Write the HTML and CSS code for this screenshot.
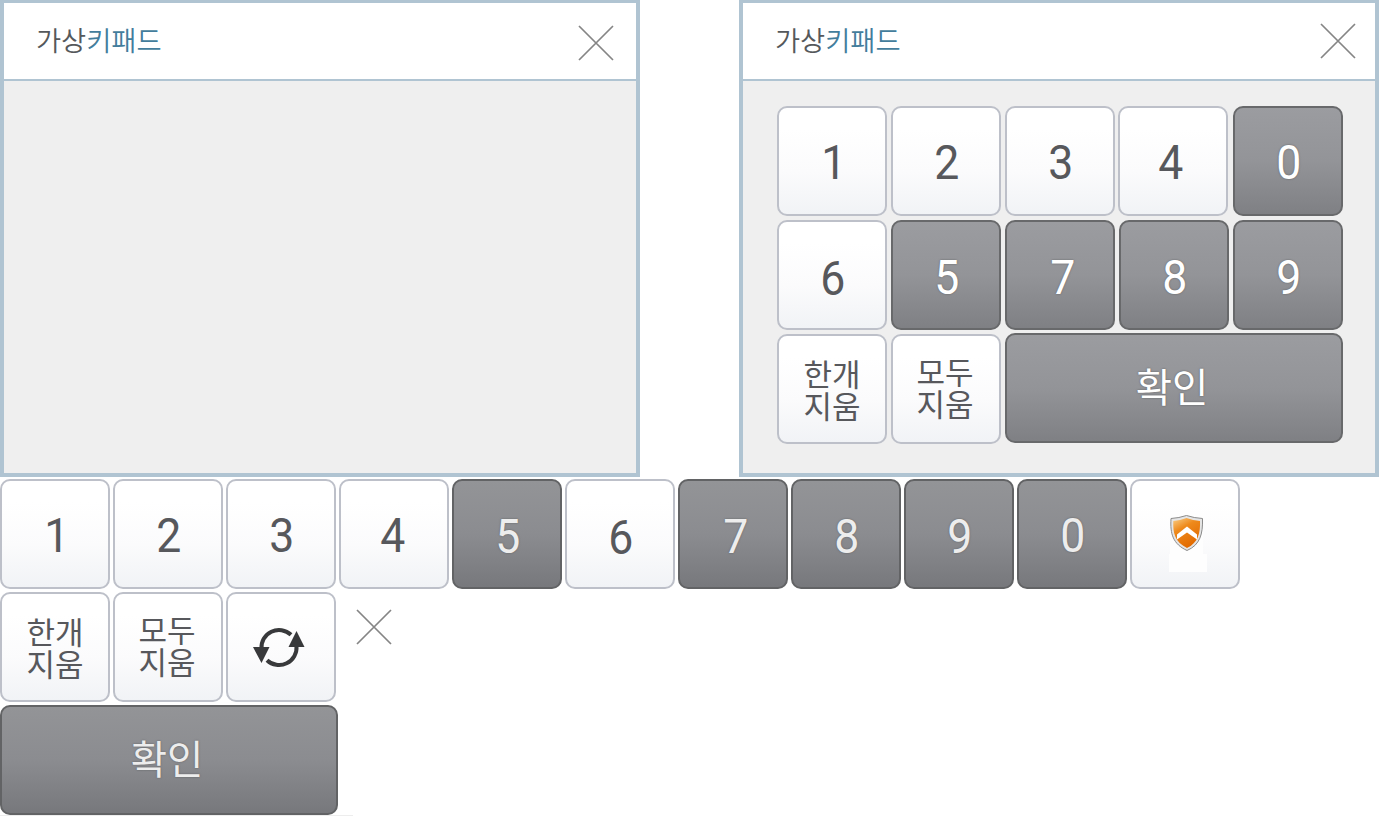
FILE: index.html
```html
<!DOCTYPE html>
<html lang="ko">
<head>
<meta charset="utf-8">
<title>가상키패드</title>
<link rel="stylesheet" href="styles.css">
</head>
<body>
<div class="panels">
  <section class="panel">
    <header class="panel-head"><h1 class="title">가상<span class="accent">키패드</span></h1>
      <svg class="close" viewBox="0 0 36 36"><path d="M1 1L35 35M35 1L1 35"/></svg></header>
  </section>
  <section class="panel panel-right">
    <header class="panel-head"><h1 class="title">가상<span class="accent">키패드</span></h1>
      <svg class="close close-high" viewBox="0 0 36 36"><path d="M1 1L35 35M35 1L1 35"/></svg></header>
    <div class="pad">
      <div class="key one"><span class="digit">1</span></div><div class="key"><span class="digit">2</span></div><div class="key"><span class="digit">3</span></div><div class="key four"><span class="digit">4</span></div><div class="key dark"><span class="digit">0</span></div>
      <div class="key six"><span class="digit">6</span></div><div class="key dark low"><span class="digit">5</span></div><div class="key dark low seven"><span class="digit">7</span></div><div class="key dark low"><span class="digit">8</span></div><div class="key dark low"><span class="digit">9</span></div>
      <div class="key word">한개<br>지움</div><div class="key word all">모두<br>지움</div><div class="key dark confirm">확인</div>
    </div>
  </section>
</div>
<div class="strip">
  <div class="row">
    <div class="key one"><span class="digit">1</span></div><div class="key"><span class="digit">2</span></div><div class="key"><span class="digit">3</span></div><div class="key four"><span class="digit">4</span></div><div class="key dark low"><span class="digit">5</span></div><div class="key six"><span class="digit">6</span></div><div class="key dark low seven"><span class="digit">7</span></div><div class="key dark low"><span class="digit">8</span></div><div class="key dark low"><span class="digit">9</span></div><div class="key dark"><span class="digit">0</span></div>
    <div class="key icon-key">
      <svg class="shield-icon" viewBox="0 0 80 60">
        <defs><linearGradient id="orange" x1="0" y1="0" x2=".5" y2="1"><stop offset="0" stop-color="#f9d08a"/><stop offset=".4" stop-color="#ee8a1c"/><stop offset="1" stop-color="#e26a00"/></linearGradient></defs>
        <path fill="#fefefe" d="M17 2h33v40h4v18h-38v-18h1z"/>
        <path class="shield-edge" d="M18 6.500Q26 6 33.500 3.500Q41 6 49.500 6.500C50 22 47 33 34 38.500C20 32 17 22 18 6.500Z"/>
        <path fill="url(#orange)" d="M20.300 9Q27 8.500 33.500 6Q40 8.500 47 9C47.500 21 45 31 34 36C22 30 19.700 21 20.300 9Z"/>
        <path fill="#fff" d="M24 22.500L34 14.500L44 22.500V27.500L34 20.500L24 27.500Z"/>
      </svg>
    </div>
  </div>
  <div class="row">
    <div class="key word">한개<br>지움</div><div class="key word all">모두<br>지움</div>
    <div class="key icon-key">
      <svg class="refresh-icon" viewBox="0 0 110 110">
        <path class="arc" d="M35.500 57A17.500 17.500 0 0 1 65 42.800M70.500 54A17.500 17.500 0 0 1 41 68.200"/>
        <path fill="#38393b" d="M27 55H43.500L35.500 71ZM62.500 55L70.500 39L78.500 55Z"/>
      </svg>
    </div>
    <svg class="close loose" viewBox="0 0 36 36"><path d="M1 1L35 35M35 1L1 35"/></svg>
  </div>
  <div class="row"><div class="key dark confirm">확인</div></div>
  <div class="sheet-edge"></div>
</div>
</body>
</html>
```
FILE: styles.css
```css
* { box-sizing: border-box; }
body { margin: 0; background: #fff; overflow: hidden; font-family: Roboto, "Noto Sans CJK KR", sans-serif; }
.panels { display: flex; justify-content: space-between; width: 1379px; height: 479px; }
.panel { width: 640px; height: 477px; border: 4px solid #b0c4d2; border-top-width: 3px; background: #efefef; }
.panel-head { display: flex; justify-content: space-between; height: 78px; padding: 0 22px 0 32px; border-bottom: 2px solid #b0c4d2; background: #fff; }
.title { margin: 16px 0 0; font: 350 27.300px/40px "Noto Sans CJK KR", sans-serif; color: #55585b; white-space: nowrap; }
.accent { color: #437d9c; }
.close { width: 36px; height: 36px; margin-top: 22px; fill: none; stroke: #858585; stroke-width: 1.700; }
.close-high { margin-top: 20px; margin-right: -3px; }
.pad { display: grid; grid-template-columns: repeat(5, 110px); grid-auto-rows: 110px; gap: 4px; padding: 25px 0 0 34px; }
.key { display: flex; align-items: center; justify-content: center; flex: none; width: 110px; height: 110px; padding: 3px 0 0 2px; border: 2px solid #bdc0c9; border-radius: 10px; background: linear-gradient(#fff 20%, #fbfbfc 60%, #f1f3f6); color: #57585c; font-size: 49px; line-height: 56px; }
.digit { transform: scaleX(.91); }
.dark { border-color: #68696b; background: linear-gradient(#9b9ca0, #939498 50%, #7f8084); color: #fff; text-shadow: 0 0 2px #5a5b5e; }
.low { padding-top: 5px; }
.one { padding-left: 4px; }
.seven { padding-left: 5px; }
.four { padding: 3px 2px 0 0; }
.pad .four { margin-left: -1px; padding-right: 4px; }
.six { padding-top: 7px; }
.word { font: 400 31px/32px "Noto Sans CJK KR", sans-serif; padding: 0; }
.all { padding: 0 2px 4px 0; }
.confirm { grid-column: span 3; width: 338px; padding: 0 4px 6px 0; margin-top: -1px; font: 400 39.500px/56px "Noto Sans CJK KR", sans-serif; }
.strip { display: flex; flex-direction: column; gap: 3px; }
.row { display: flex; gap: 3px; }
.strip .dark { background: linear-gradient(#939497, #8b8c90 50%, #77787c); color: #ededed; border-color: #626365; }
.strip .confirm { margin-top: 0; }
.icon-key { padding: 0; }
.shield-icon { flex: none; width: 80px; height: 60px; margin: 16px 0 0 16px; }
.shield-edge { fill: #e5e5e5; stroke: #8b8b8b; stroke-width: 1; }
.refresh-icon { flex: none; width: 110px; height: 110px; }
.arc { fill: none; stroke: #38393b; stroke-width: 4; }
.loose { margin: 17px 0 0 17px; }
.sheet-edge { width: 353px; height: 1px; margin-top: -3px; background: #ededed; }
```
